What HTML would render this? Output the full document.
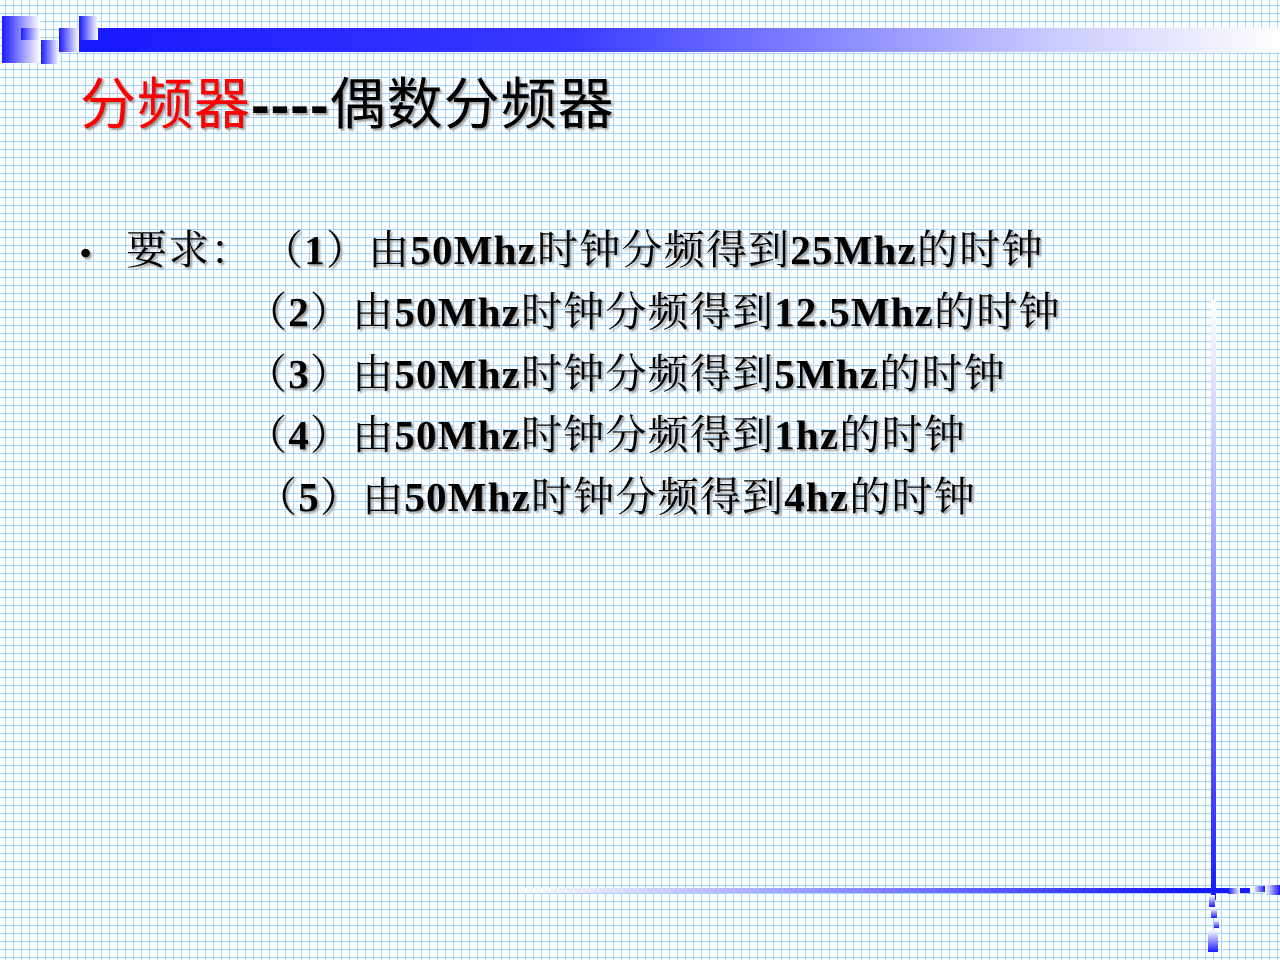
<!DOCTYPE html>
<html><head><meta charset="utf-8"><style>
html,body{margin:0;padding:0}
body{width:1280px;height:960px;position:relative;overflow:hidden;background:#fff}
.grid{position:absolute;inset:0;
background-image:
linear-gradient(to right,#8ecbff 1px,transparent 1px),
linear-gradient(to bottom,#8ecbff 1px,transparent 1px);
background-size:8px 8px;background-position:5px 5px;opacity:.8}
.g{position:absolute;background:linear-gradient(to right,#1a1aff,#fff)}
.t{position:absolute;white-space:nowrap;text-shadow:2px 2px 2px #999}
.title{left:80px;top:60px;font:56px "Liberation Sans","Noto Sans CJK SC",sans-serif;letter-spacing:1px}
.l{font-size:41px;font-family:"Liberation Serif","Noto Serif CJK SC",serif;color:#000;line-height:50px;letter-spacing:1.2px}
.l b{font-weight:bold}
</style></head><body>
<div class="grid"></div>
<div class="g" style="left:2px;top:16px;width:38px;height:47px"></div>
<div class="g" style="left:21px;top:28px;width:19px;height:12px"></div>
<div class="g" style="left:41px;top:40px;width:18px;height:24px"></div>
<div class="g" style="left:59px;top:28px;width:20px;height:24px"></div>
<div class="g" style="left:79px;top:16px;width:19px;height:24px"></div>
<div style="position:absolute;left:79px;top:40px;width:20px;height:12px;background:#1a1aff"></div>
<div style="position:absolute;left:98px;top:28px;width:1182px;height:24px;background:linear-gradient(to right,#1a1aff,#3a3aff 40%,#c8c8ff 80%,#fff)"></div>
<div style="position:absolute;left:1211px;top:300px;width:5px;height:600px;background:linear-gradient(to bottom,#fff,#1a1aff)"></div>
<div style="position:absolute;left:520px;top:888px;width:730px;height:5px;background:linear-gradient(to right,#fff,#1a1aff 90%)"></div>
<div class="g" style="left:1228px;top:888px;width:12px;height:6px"></div>
<div class="g" style="left:1253px;top:886px;width:12px;height:6px;background:linear-gradient(to right,#fff,#1a1aff)"></div>
<div class="g" style="left:1265px;top:885px;width:15px;height:10px;background:linear-gradient(to right,#fff,#1a1aff)"></div>
<div style="position:absolute;left:1209px;top:895px;width:6px;height:12px;background:linear-gradient(to bottom,#fff,#1a1aff)"></div>
<div style="position:absolute;left:1211px;top:908px;width:6px;height:10px;background:linear-gradient(to bottom,#fff,#1a1aff)"></div>
<div style="position:absolute;left:1214px;top:920px;width:5px;height:8px;background:linear-gradient(to bottom,#fff,#1a1aff)"></div>
<div style="position:absolute;left:1208px;top:930px;width:10px;height:22px;background:linear-gradient(to bottom,#fff,#1a1aff)"></div>

<div class="t title"><span style="color:#ff0000">分频器</span><b style="color:#000">----</b><span style="color:#000">偶数分频器</span></div>

<div class="t l" style="left:80px;top:228px;font-family:'Liberation Sans',sans-serif;font-size:32px">•</div>
<div class="t l" style="left:126px;top:225px">要求：</div>
<div class="t l" style="left:262px;top:225px">（<b>1</b>）由<b>50Mhz</b>时钟分频得到<b>25Mhz</b>的时钟</div>
<div class="t l" style="left:246px;top:287px">（<b>2</b>）由<b>50Mhz</b>时钟分频得到<b>12.5Mhz</b>的时钟</div>
<div class="t l" style="left:246px;top:349px">（<b>3</b>）由<b>50Mhz</b>时钟分频得到<b>5Mhz</b>的时钟</div>
<div class="t l" style="left:246px;top:410px">（<b>4</b>）由<b>50Mhz</b>时钟分频得到<b>1hz</b>的时钟</div>
<div class="t l" style="left:256px;top:472px">（<b>5</b>）由<b>50Mhz</b>时钟分频得到<b>4hz</b>的时钟</div>
</body></html>
